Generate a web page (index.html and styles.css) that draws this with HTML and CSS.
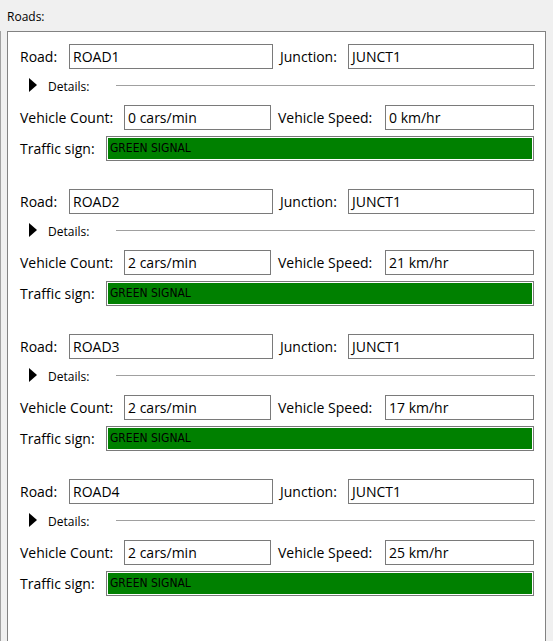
FILE: index.html
```html
<!DOCTYPE html>
<html>
<head>
<meta charset="utf-8">
<link rel="stylesheet" href="styles.css">
</head>
<body>
<div class="title">Roads:</div>
<div class="area">
  <div class="panel">
    <div class="block">
      <div class="row">
        <span class="lbl w-road">Road:</span><span class="field w-roadf">ROAD1</span>
        <span class="lbl w-junc">Junction:</span><span class="field w-juncf">JUNCT1</span>
      </div>
      <div class="details"><span class="tri"></span><span class="dtext">Details:</span><span class="dline"></span></div>
      <div class="row">
        <span class="lbl w-count">Vehicle Count:</span><span class="field w-countf">0 cars/min</span>
        <span class="lbl w-speed">Vehicle Speed:</span><span class="field w-speedf">0 km/hr</span>
      </div>
      <div class="row sign-row">
        <span class="lbl w-sign">Traffic sign:</span><span class="signal">GREEN SIGNAL</span>
      </div>
    </div>
    <div class="block">
      <div class="row">
        <span class="lbl w-road">Road:</span><span class="field w-roadf">ROAD2</span>
        <span class="lbl w-junc">Junction:</span><span class="field w-juncf">JUNCT1</span>
      </div>
      <div class="details"><span class="tri"></span><span class="dtext">Details:</span><span class="dline"></span></div>
      <div class="row">
        <span class="lbl w-count">Vehicle Count:</span><span class="field w-countf">2 cars/min</span>
        <span class="lbl w-speed">Vehicle Speed:</span><span class="field w-speedf">21 km/hr</span>
      </div>
      <div class="row sign-row">
        <span class="lbl w-sign">Traffic sign:</span><span class="signal">GREEN SIGNAL</span>
      </div>
    </div>
    <div class="block">
      <div class="row">
        <span class="lbl w-road">Road:</span><span class="field w-roadf">ROAD3</span>
        <span class="lbl w-junc">Junction:</span><span class="field w-juncf">JUNCT1</span>
      </div>
      <div class="details"><span class="tri"></span><span class="dtext">Details:</span><span class="dline"></span></div>
      <div class="row">
        <span class="lbl w-count">Vehicle Count:</span><span class="field w-countf">2 cars/min</span>
        <span class="lbl w-speed">Vehicle Speed:</span><span class="field w-speedf">17 km/hr</span>
      </div>
      <div class="row sign-row">
        <span class="lbl w-sign">Traffic sign:</span><span class="signal">GREEN SIGNAL</span>
      </div>
    </div>
    <div class="block">
      <div class="row">
        <span class="lbl w-road">Road:</span><span class="field w-roadf">ROAD4</span>
        <span class="lbl w-junc">Junction:</span><span class="field w-juncf">JUNCT1</span>
      </div>
      <div class="details"><span class="tri"></span><span class="dtext">Details:</span><span class="dline"></span></div>
      <div class="row">
        <span class="lbl w-count">Vehicle Count:</span><span class="field w-countf">2 cars/min</span>
        <span class="lbl w-speed">Vehicle Speed:</span><span class="field w-speedf">25 km/hr</span>
      </div>
      <div class="row sign-row">
        <span class="lbl w-sign">Traffic sign:</span><span class="signal">GREEN SIGNAL</span>
      </div>
    </div>
  </div>
</div>
</body>
</html>
```
FILE: styles.css
```css
html, body {
  margin: 0;
  padding: 0;
}
body {
  width: 553px;
  height: 641px;
  overflow: hidden;
  background: #f0f0f0;
  font-family: "Open Sans", "Noto Sans", sans-serif;
  color: #000;
}
.title {
  box-sizing: border-box;
  height: 31px;
  padding: 9px 0 0 7px;
  font-size: 12px;
  line-height: 16px;
}
.area {
  border-left: 1px solid #a0a0a0;
  height: 620px;
  box-sizing: border-box;
}
.panel {
  margin-left: 6px;
  width: 539px;
  height: 640px;
  box-sizing: border-box;
  border: 1px solid #828282;
  background: #fff;
  padding: 12px 10px 0 12px;
  display: flex;
  flex-direction: column;
  gap: 28px;
}
.block {
  display: flex;
  flex-direction: column;
}
.row {
  display: flex;
  align-items: center;
  height: 25px;
}
.sign-row {
  margin-top: 6px;
}
.lbl {
  font-size: 14px;
  line-height: 25px;
  white-space: nowrap;
  box-sizing: border-box;
}
.field {
  box-sizing: border-box;
  height: 25px;
  border: 1px solid #7a7a7a;
  background: #fff;
  font-size: 14px;
  line-height: 23px;
  padding-left: 3px;
  white-space: nowrap;
}
.w-road { width: 49px; }
.w-roadf { width: 204px; }
.w-junc { width: 68px; margin-left: 7px; }
.w-juncf { width: 186px; }
.w-count { width: 104px; }
.w-countf { width: 147px; }
.w-speed { width: 107px; margin-left: 7px; }
.w-speedf { width: 149px; }
.w-sign { width: 86px; }
.signal {
  box-sizing: border-box;
  width: 428px;
  height: 25px;
  border: 1px solid #7a7a7a;
  box-shadow: inset 0 0 0 1px #fff;
  background: #008000;
  font-family: "DejaVu Sans Condensed", "DejaVu Sans", sans-serif;
  font-size: 12px;
  line-height: 23px;
  padding-left: 3px;
  color: #000;
  white-space: nowrap;
}
.details {
  display: flex;
  align-items: center;
  height: 32px;
  margin-bottom: 4px;
}
.tri {
  width: 0;
  height: 0;
  margin-left: 9px;
  border-left: 8px solid #000;
  border-top: 7px solid transparent;
  border-bottom: 7px solid transparent;
}
.dtext {
  width: 68px;
  margin-left: 11px;
  font-size: 12px;
  line-height: 16px;
  padding-top: 3px;
}
.dline {
  flex: 1;
  height: 1px;
  background: #a0a0a0;
}
```
